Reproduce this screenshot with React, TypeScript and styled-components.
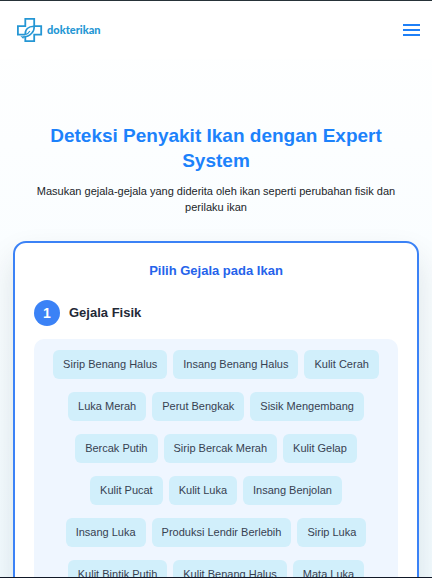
import React, { useState } from "react";
import styled, { createGlobalStyle } from "styled-components";

const GlobalStyle = createGlobalStyle`
  *, *::before, *::after { box-sizing: border-box; }
  body {
    margin: 0;
    font-family: "Liberation Sans", Arial, sans-serif;
    color: #1f2937;
    background: #ffffff;
  }
`;

const Shell = styled.div`
  display: flex;
  flex-direction: column;
  height: 100vh;
  border-top: 1px solid #263238;
  border-bottom: 1px solid #111827;
`;

const Scroller = styled.div`
  flex: 1;
  min-height: 0;
  overflow-y: auto;
  scrollbar-width: none;
  background: linear-gradient(180deg, #ffffff 0%, #f3fbff 100%);
`;

const Header = styled.header`
  display: flex;
  align-items: center;
  justify-content: space-between;
  height: 58px;
  padding: 0 12px 0 16px;
  background: #ffffff;
`;

const Brand = styled.a`
  display: flex;
  align-items: center;
  gap: 4px;
  color: #2596d4;
  font-family: Lato, sans-serif;
  font-size: 11px;
  font-weight: 900;
  line-height: 16px;
  text-decoration: none;
`;

const MenuButton = styled.button`
  display: flex;
  padding: 0;
  border: 0;
  background: none;
  color: #1f80f7;
  cursor: pointer;
`;

const Main = styled.main`
  padding: 64px 13px 32px;
`;

const Hero = styled.section`
  padding: 0 16px;
  text-align: center;
`;

const Title = styled.h1`
  margin: 0;
  color: #1c82fb;
  font-size: 19px;
  font-weight: 700;
  line-height: 25px;
`;

const Lead = styled.p`
  margin: 10px 0 0;
  color: #212529;
  font-size: 11px;
  line-height: 16px;
`;

const Card = styled.section`
  margin-top: 26px;
  padding: 19px;
  border: 2px solid #3b82f6;
  border-radius: 13px;
  background: #ffffff;
  box-shadow: 0 16px 32px rgba(20, 40, 50, 0.12);
`;

const CardTitle = styled.h2`
  margin: 0;
  color: #2563eb;
  font-size: 13px;
  font-weight: 700;
  line-height: 18px;
  text-align: center;
`;

const GroupHeading = styled.div`
  display: flex;
  align-items: center;
  gap: 9px;
  margin: 20px 0 13px;
`;

const StepNumber = styled.span`
  display: flex;
  align-items: center;
  justify-content: center;
  width: 26px;
  height: 26px;
  border-radius: 50%;
  background: #3b82f6;
  color: #ffffff;
  font-size: 14px;
  font-weight: 700;
`;

const GroupTitle = styled.h3`
  margin: 0;
  font-size: 13px;
  font-weight: 700;
  line-height: 18px;
`;

const ChipPanel = styled.div`
  display: flex;
  flex-wrap: wrap;
  justify-content: center;
  gap: 13px 6px;
  padding: 11px 16px;
  border-radius: 10px;
  background: #eff6ff;
`;

const Chip = styled.button<{ $selected: boolean }>`
  padding: 6px 10px;
  border: 0;
  border-radius: 6px;
  background: ${(p) => (p.$selected ? "#3b82f6" : "#d1effb")};
  color: ${(p) => (p.$selected ? "#ffffff" : "#374151")};
  font-family: inherit;
  font-size: 11px;
  line-height: 17px;
  white-space: nowrap;
  cursor: pointer;
`;

const symptoms = [
  "Sirip Benang Halus",
  "Insang Benang Halus",
  "Kulit Cerah",
  "Luka Merah",
  "Perut Bengkak",
  "Sisik Mengembang",
  "Bercak Putih",
  "Sirip Bercak Merah",
  "Kulit Gelap",
  "Kulit Pucat",
  "Kulit Luka",
  "Insang Benjolan",
  "Insang Luka",
  "Produksi Lendir Berlebih",
  "Sirip Luka",
  "Kulit Bintik Putih",
  "Kulit Benang Halus",
  "Mata Luka",
];

function Logo() {
  return (
    <svg width="27" height="26" viewBox="0 0 27 26" fill="none" stroke="#2596d4" strokeWidth="1.8" aria-hidden="true">
      <path d="M9.3 20v4.2h8.9v-6.6h7V9.2h-7V1.8H9.3v7.4H1.9v8.4h7.4" />
      <path d="M9.3 17.6c-.6-4.9 3-8.6 8.9-8.4.4 4.8-3.4 10.6-11.2 10.8" strokeWidth="1.6" />
      <path d="M9.3 17.6c2-.4 3.5-1.6 4.6-3.6" strokeWidth="1.2" />
      <path d="m4.4 19 3.2.4-.3 2.6Z" fill="#2596d4" stroke="none" />
    </svg>
  );
}

function MenuIcon() {
  return (
    <svg width="17" height="14" viewBox="0 0 17 14" stroke="currentColor" strokeWidth="2" aria-hidden="true">
      <path d="M0 2h17M0 7h17M0 12h17" />
    </svg>
  );
}

export default function App() {
  const [selected, setSelected] = useState<string[]>([]);
  const toggle = (name: string) =>
    setSelected((current) =>
      current.includes(name) ? current.filter((item) => item !== name) : [...current, name]
    );

  return (
    <>
      <GlobalStyle />
      <Shell>
        <Scroller>
          <Header>
            <Brand href="#">
              <Logo />
              dokterikan
            </Brand>
            <MenuButton type="button" aria-label="Menu">
              <MenuIcon />
            </MenuButton>
          </Header>
          <Main>
            <Hero>
              <Title>Deteksi Penyakit Ikan dengan Expert System</Title>
              <Lead>
                Masukan gejala-gejala yang diderita oleh ikan seperti perubahan fisik dan perilaku ikan
              </Lead>
            </Hero>
            <Card>
              <CardTitle>Pilih Gejala pada Ikan</CardTitle>
              <GroupHeading>
                <StepNumber>1</StepNumber>
                <GroupTitle>Gejala Fisik</GroupTitle>
              </GroupHeading>
              <ChipPanel>
                {symptoms.map((name) => (
                  <Chip
                    key={name}
                    type="button"
                    $selected={selected.includes(name)}
                    aria-pressed={selected.includes(name)}
                    onClick={() => toggle(name)}
                  >
                    {name}
                  </Chip>
                ))}
              </ChipPanel>
            </Card>
          </Main>
        </Scroller>
      </Shell>
    </>
  );
}
